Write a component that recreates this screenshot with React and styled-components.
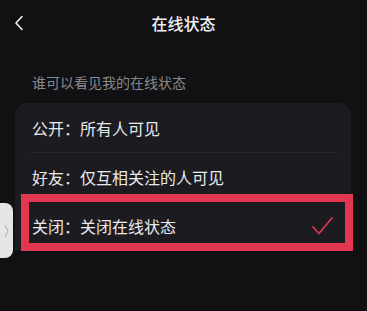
import React from "react";
import styled, { createGlobalStyle } from "styled-components";

const GlobalStyle = createGlobalStyle`
  html, body {
    margin: 0;
    padding: 0;
    background: #111114;
  }
  body {
    font-family: "Noto Sans CJK SC", "Noto Sans", sans-serif;
    color: #ececee;
  }
`;

const Page = styled.div`
  position: relative;
  width: 367px;
  height: 311px;
  overflow: hidden;
  background: #111114;
`;

const Header = styled.div`
  height: 46px;
  display: grid;
  grid-template-columns: 46px 1fr 46px;
  align-items: center;
`;

const BackButton = styled.button`
  background: none;
  border: 0;
  padding: 0 0 0 14px;
  height: 46px;
  display: flex;
  align-items: center;
  color: #f2f2f2;
  cursor: pointer;
`;

const Title = styled.h1`
  margin: 0;
  text-align: center;
  font-size: 16px;
  font-weight: 500;
  color: #f2f2f4;
`;

const Caption = styled.div`
  padding: 25px 0 0 32px;
  height: 32px;
  font-size: 14px;
  line-height: 22px;
  color: #88888c;
`;

const Card = styled.ul`
  list-style: none;
  margin: 0 16px 0 15px;
  padding: 0;
  background: #1c1c20;
  border-radius: 12px 12px 0 0;
`;

const Row = styled.li`
  position: relative;
  height: 49px;
  display: flex;
  align-items: center;
  justify-content: space-between;
  padding: 0 18px 0 17px;
  font-size: 16px;
  color: #e9e9ec;

  & + &::before {
    content: "";
    position: absolute;
    top: 0;
    left: 15px;
    right: 14px;
    border-top: 1px solid #2a2a2f;
  }

  ${(p) =>
    p.$highlight &&
    `
    &::after {
      content: "";
      position: absolute;
      left: 6px;
      top: -7px;
      right: -2px;
      bottom: -1px;
      border: 8px solid #e1384f;
      pointer-events: none;
    }
  `}
`;

const Handle = styled.div`
  position: absolute;
  left: 0;
  top: 203px;
  width: 13px;
  height: 55px;
  background: #e6e6e8;
  border-radius: 0 8px 8px 0;
  display: flex;
  align-items: center;
  justify-content: center;
`;

const options = [
  { label: "公开：所有人可见" },
  { label: "好友：仅互相关注的人可见" },
  { label: "关闭：关闭在线状态", selected: true },
];

export default function App() {
  return (
    <Page>
      <GlobalStyle />
      <Header>
        <BackButton aria-label="返回">
          <svg width="10" height="16" viewBox="0 0 10 16">
            <polyline
              points="8,1.5 2,8 8,14.5"
              fill="none"
              stroke="currentColor"
              strokeWidth="1.6"
              strokeLinecap="round"
              strokeLinejoin="round"
            />
          </svg>
        </BackButton>
        <Title>在线状态</Title>
        <span />
      </Header>
      <Caption>谁可以看见我的在线状态</Caption>
      <Card>
        {options.map((o) => (
          <Row key={o.label} $highlight={o.selected}>
            <span>{o.label}</span>
            {o.selected && (
              <svg width="21" height="18" viewBox="0 0 21 18">
                <polyline
                  points="1,10 7,16.5 20,1"
                  fill="none"
                  stroke="#d4384e"
                  strokeWidth="1.8"
                  strokeLinecap="round"
                  strokeLinejoin="round"
                />
              </svg>
            )}
          </Row>
        ))}
      </Card>
      <Handle>
        <svg width="5" height="14" viewBox="0 0 5 14">
          <polyline
            points="1,1 4,7 1,13"
            fill="none"
            stroke="#a8a8ac"
            strokeWidth="1"
          />
        </svg>
      </Handle>
    </Page>
  );
}
